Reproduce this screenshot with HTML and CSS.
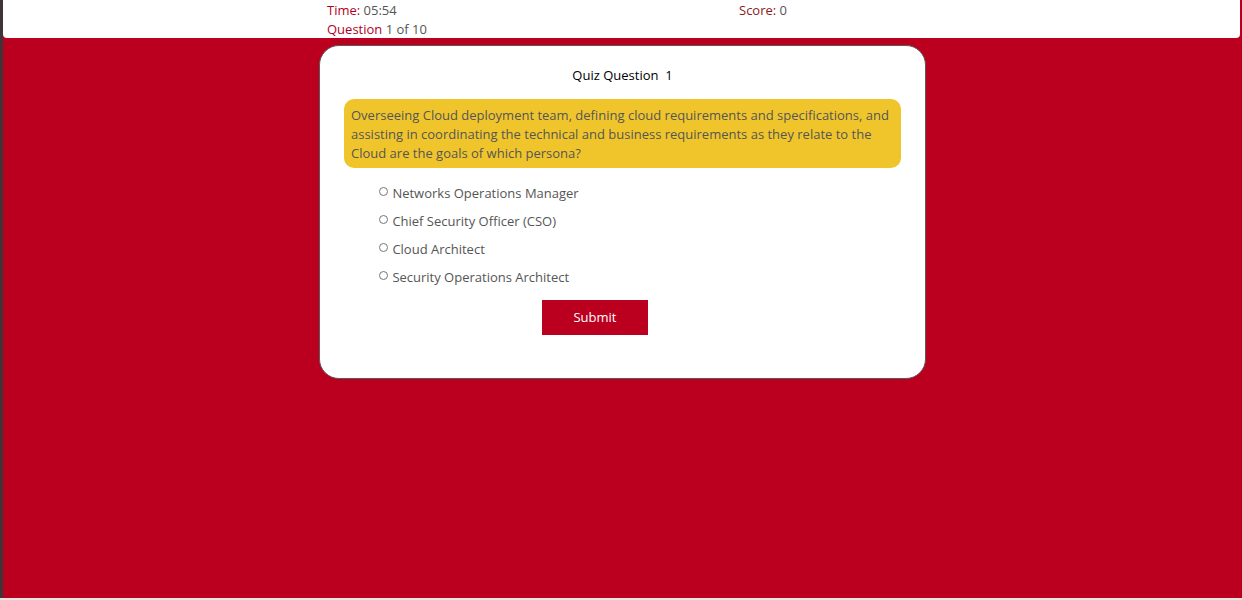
FILE: index.html
```html
<!DOCTYPE html>
<html lang="en">
<head>
    <meta charset="UTF-8">
    <meta name="viewport" content="width=device-width, initial-scale=1.0">
    <title>Quiz</title>
    <link rel="stylesheet" href="styles.css">
</head>
<body>
    <div class="page">
        <header class="topbar">
            <div class="topbar-inner">
                <div class="stat"><span class="label">Time:</span> 05:54</div>
                <div class="stat"><span class="label score-label">Score:</span> 0</div>
                <div class="stat"><span class="label">Question</span> 1 of 10</div>
            </div>
        </header>
        <section class="card">
            <h2 class="card-title">Quiz Question&nbsp; 1</h2>
            <p class="question">Overseeing Cloud deployment team, defining cloud requirements and specifications, and assisting in coordinating the technical and business requirements as they relate to the Cloud are the goals of which persona?</p>
            <form class="answers">
                <label class="option"><input type="radio" name="answer"> Networks Operations Manager</label>
                <label class="option"><input type="radio" name="answer"> Chief Security Officer (CSO)</label>
                <label class="option"><input type="radio" name="answer"> Cloud Architect</label>
                <label class="option"><input type="radio" name="answer"> Security Operations Architect</label>
                <button type="button" class="submit">Submit</button>
            </form>
        </section>
    </div>
</body>
</html>
```

FILE: styles.css
```css
html, body { margin: 0; padding: 0; }
body { background: #e6e6e6; font-family: "Open Sans", "Liberation Sans", sans-serif; font-size: 13px; color: #555; }
.page { height: 598px; background: #bb001f; border-left: 3px solid #3f3537; box-sizing: border-box; overflow: hidden; }
.topbar { background: #fff; height: 38px; margin-right: 2px; border-radius: 0 0 4px 4px; }
.topbar-inner { display: grid; grid-template-columns: 412px 1fr; width: 598px; margin-left: 324px; padding-top: 1px; line-height: 19px; }
.label { color: #b3001e; }
.score-label { color: #8a1a22; }
.card { width: 557px; margin: 7px 0 0 316px; padding: 20px 24px 43px; background: #fff; border: 1px solid #5a5a5a; border-radius: 20px; }
.card-title { margin: 0; font-size: 13px; font-weight: 400; line-height: 19px; color: #000; text-align: center; }
.question { margin: 14px 0 0; padding: 7px 7px 5px; background: #f0c52c; border-radius: 10px; line-height: 19px; color: #555; }
.answers { margin-top: 11px; padding-left: 35px; }
.option { display: block; line-height: 28px; color: #555; }
.option input { appearance: none; -webkit-appearance: none; width: 9px; height: 9px; margin: 0 1px 0 0; border: 1px solid #767676; border-radius: 50%; background: #fff; vertical-align: 1px; position: relative; top: -1px; }
.submit { display: block; width: 106px; height: 35px; margin: 9px 0 0 163px; padding: 0 0 2px; border: 0; background: #bb001f; color: #fff; font-family: inherit; font-size: 13px; cursor: pointer; }
```
